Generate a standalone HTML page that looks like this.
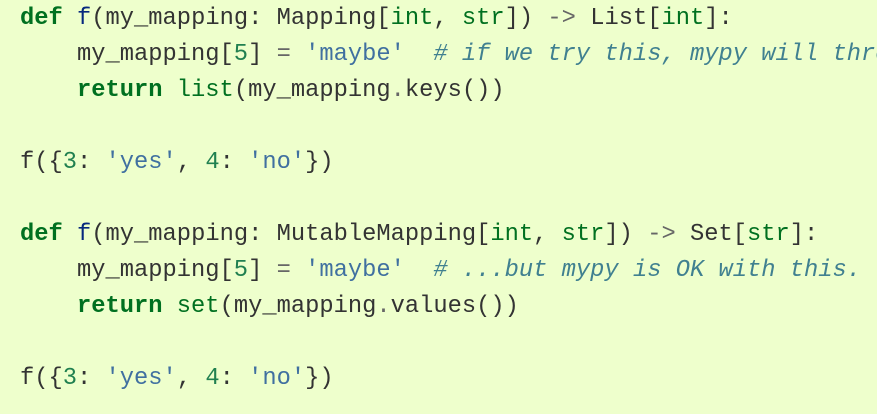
<!DOCTYPE html>
<html><head><style>
html,body{margin:0;padding:0;background:#eeffcc;width:877px;height:414px;overflow:hidden}
pre{margin:0;padding:0 0 0 20px;width:857px;height:414px;overflow:hidden;font-family:"Liberation Mono",monospace;font-size:23.75px;line-height:36px;color:#333;white-space:pre;position:relative;top:1px}
.k{color:#007020;font-weight:bold}.b{color:#007020}.f{color:#06287e}.s{color:#4070a0}.c{color:#408090;font-style:italic}.n{color:#208050}.o{color:#666}
</style></head><body><pre><span class="k">def</span> <span class="f">f</span>(my_mapping: Mapping[<span class="b">int</span>, <span class="b">str</span>]) <span class="o">-&gt;</span> List[<span class="b">int</span>]:
    my_mapping[<span class="n">5</span>] <span class="o">=</span> <span class="s">'maybe'</span>  <span class="c"># if we try this, mypy will thro</span>
    <span class="k">return</span> <span class="b">list</span>(my_mapping<span class="o">.</span>keys())

f({<span class="n">3</span>: <span class="s">'yes'</span>, <span class="n">4</span>: <span class="s">'no'</span>})

<span class="k">def</span> <span class="f">f</span>(my_mapping: MutableMapping[<span class="b">int</span>, <span class="b">str</span>]) <span class="o">-&gt;</span> Set[<span class="b">str</span>]:
    my_mapping[<span class="n">5</span>] <span class="o">=</span> <span class="s">'maybe'</span>  <span class="c"># ...but mypy is OK with this.</span>
    <span class="k">return</span> <span class="b">set</span>(my_mapping<span class="o">.</span>values())

f({<span class="n">3</span>: <span class="s">'yes'</span>, <span class="n">4</span>: <span class="s">'no'</span>})
</pre></body></html>
